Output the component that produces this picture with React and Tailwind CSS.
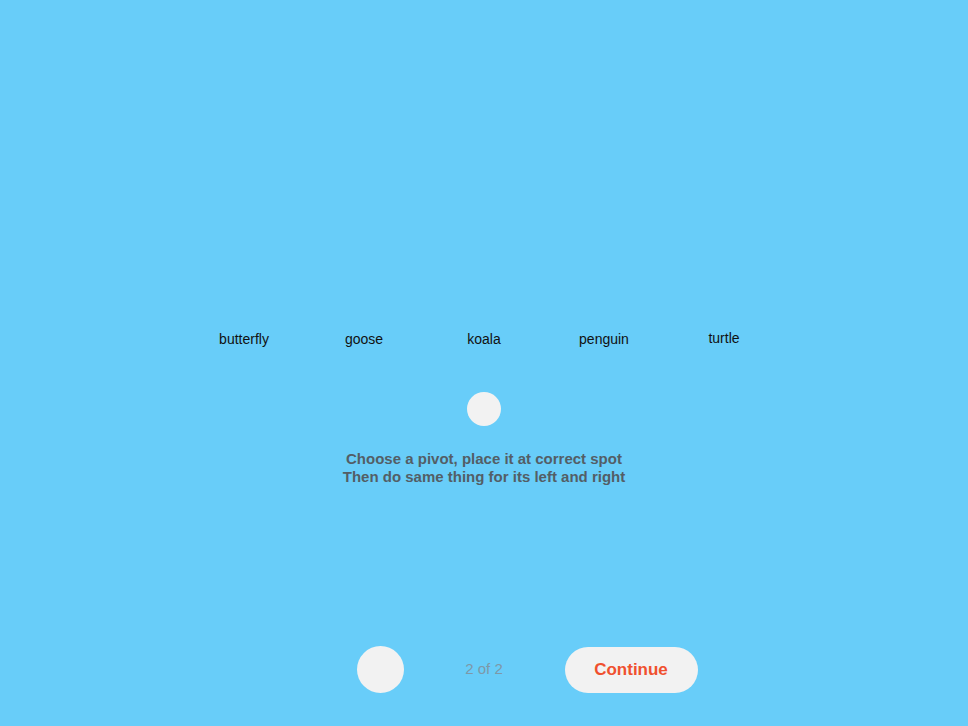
import React from "react";

const words = ["butterfly", "goose", "koala", "penguin", "turtle"];

const App = () => {
  return (
    <div
      className="h-[726px] w-full bg-[#68cdf9] flex flex-col items-center overflow-hidden"
      style={{ fontFamily: '"Liberation Sans", Arial, sans-serif' }}
    >
      <div className="mt-[329px] flex justify-center">
        {words.map((w, i) => (
          <div
            key={w}
            className={
              "w-[120px] text-center text-[14px] leading-[20px] text-[#111111]" +
              (i === 4 ? " -translate-y-px" : "")
            }
          >
            {w}
          </div>
        ))}
      </div>

      <div className="mt-[43px] w-[34px] h-[34px] rounded-full bg-[#f2f2f2]" />

      <div className="mt-[24px] text-center text-[15px] leading-[18px] font-bold text-[#535e66]">
        <p>Choose a pivot, place it at correct spot</p>
        <p>Then do same thing for its left and right</p>
      </div>

      <div className="mt-auto mb-[33px] w-full grid grid-cols-[1fr_161px_1fr] items-center">
        <div className="flex justify-end">
          <button className="w-[47px] h-[47px] rounded-full bg-[#f2f2f2]" />
        </div>
        <div className="text-center text-[15px] text-[#7e98a8]">2 of 2</div>
        <div className="flex justify-start">
          <button className="w-[133px] h-[46px] rounded-full bg-[#f2f2f2] text-[17px] font-bold text-[#f0502e]">
            Continue
          </button>
        </div>
      </div>
    </div>
  );
};

export default App;
